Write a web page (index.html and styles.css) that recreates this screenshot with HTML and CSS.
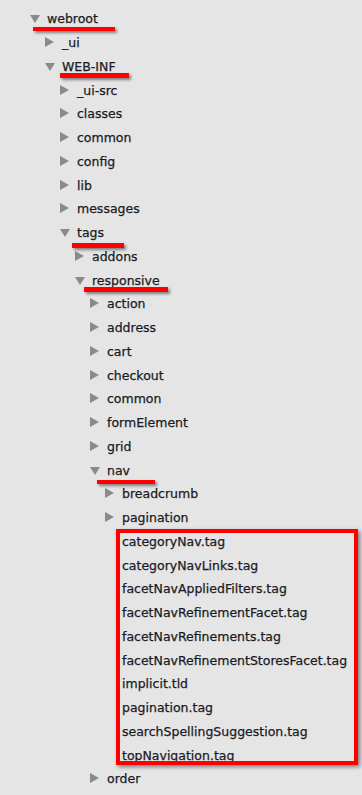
FILE: index.html
```html
<!DOCTYPE html>
<html lang="en">
<head>
    <meta charset="UTF-8">
    <meta name="viewport" content="width=device-width, initial-scale=1.0">
    <title>Project Explorer - webroot</title>
    <link rel="stylesheet" href="styles.css">
</head>
<body>
    <ul class="tree level0">
        <li>
            <div class="row open"><span class="twisty"></span><span class="label">webroot</span><span class="mark mark-webroot"></span></div>
            <ul class="tree">
                <li><div class="row closed"><span class="twisty"></span><span class="label">_ui</span></div></li>
                <li>
                    <div class="row open"><span class="twisty"></span><span class="label">WEB-INF</span><span class="mark mark-webinf"></span></div>
                    <ul class="tree">
                        <li><div class="row closed"><span class="twisty"></span><span class="label">_ui-src</span></div></li>
                        <li><div class="row closed"><span class="twisty"></span><span class="label">classes</span></div></li>
                        <li><div class="row closed"><span class="twisty"></span><span class="label">common</span></div></li>
                        <li><div class="row closed"><span class="twisty"></span><span class="label">config</span></div></li>
                        <li><div class="row closed"><span class="twisty"></span><span class="label">lib</span></div></li>
                        <li><div class="row closed"><span class="twisty"></span><span class="label">messages</span></div></li>
                        <li>
                            <div class="row open"><span class="twisty"></span><span class="label">tags</span><span class="mark mark-tags"></span></div>
                            <ul class="tree">
                                <li><div class="row closed"><span class="twisty"></span><span class="label">addons</span></div></li>
                                <li>
                                    <div class="row open"><span class="twisty"></span><span class="label">responsive</span><span class="mark mark-responsive"></span></div>
                                    <ul class="tree">
                                        <li><div class="row closed"><span class="twisty"></span><span class="label">action</span></div></li>
                                        <li><div class="row closed"><span class="twisty"></span><span class="label">address</span></div></li>
                                        <li><div class="row closed"><span class="twisty"></span><span class="label">cart</span></div></li>
                                        <li><div class="row closed"><span class="twisty"></span><span class="label">checkout</span></div></li>
                                        <li><div class="row closed"><span class="twisty"></span><span class="label">common</span></div></li>
                                        <li><div class="row closed"><span class="twisty"></span><span class="label">formElement</span></div></li>
                                        <li><div class="row closed"><span class="twisty"></span><span class="label">grid</span></div></li>
                                        <li>
                                            <div class="row open"><span class="twisty"></span><span class="label">nav</span><span class="mark mark-nav"></span></div>
                                            <ul class="tree">
                                                <li><div class="row closed"><span class="twisty"></span><span class="label">breadcrumb</span></div></li>
                                                <li><div class="row closed"><span class="twisty"></span><span class="label">pagination</span></div></li>
                                                <li class="files">
                                                    <div class="row file"><span class="twisty"></span><span class="label">categoryNav.tag</span></div>
                                                    <div class="row file"><span class="twisty"></span><span class="label">categoryNavLinks.tag</span></div>
                                                    <div class="row file"><span class="twisty"></span><span class="label">facetNavAppliedFilters.tag</span></div>
                                                    <div class="row file"><span class="twisty"></span><span class="label">facetNavRefinementFacet.tag</span></div>
                                                    <div class="row file"><span class="twisty"></span><span class="label">facetNavRefinements.tag</span></div>
                                                    <div class="row file"><span class="twisty"></span><span class="label">facetNavRefinementStoresFacet.tag</span></div>
                                                    <div class="row file"><span class="twisty"></span><span class="label">implicit.tld</span></div>
                                                    <div class="row file"><span class="twisty"></span><span class="label">pagination.tag</span></div>
                                                    <div class="row file"><span class="twisty"></span><span class="label">searchSpellingSuggestion.tag</span></div>
                                                    <div class="row file"><span class="twisty"></span><span class="label">topNavigation.tag</span></div>
                                                </li>
                                            </ul>
                                        </li>
                                        <li><div class="row closed"><span class="twisty"></span><span class="label">order</span></div></li>
                                    </ul>
                                </li>
                            </ul>
                        </li>
                    </ul>
                </li>
            </ul>
        </li>
    </ul>
</body>
</html>
```

FILE: styles.css
```css
html, body {
    margin: 0;
    background: #e5e5e5;
}
body {
    padding: 7px 0 0 30px;
    font-family: "DejaVu Sans", sans-serif;
    font-size: 12.5px;
    color: #1a1a24;
    -webkit-text-stroke: 0.25px #1a1a24;
    overflow: hidden;
}
.tree {
    list-style: none;
    margin: 0;
    padding: 0 0 0 15px;
}
.tree.level0 {
    padding-left: 0;
}
.row {
    position: relative;
    display: flex;
    align-items: center;
    height: 23.75px;
    white-space: nowrap;
}
.twisty {
    flex: 0 0 17px;
    height: 11px;
    position: relative;
}
.closed .twisty::before,
.open .twisty::before {
    content: '';
    position: absolute;
    width: 0;
    height: 0;
}
.closed .twisty::before {
    left: 0;
    top: 0;
    border-left: 9px solid #8a8a8a;
    border-top: 5.5px solid transparent;
    border-bottom: 5.5px solid transparent;
}
.open .twisty::before {
    left: 0;
    top: 2px;
    border-top: 8px solid #8a8a8a;
    border-left: 5.5px solid transparent;
    border-right: 5.5px solid transparent;
}

/* red annotation marks */
.mark {
    position: absolute;
    height: 4px;
    background: #ff0000;
    box-shadow: 2px 2px 3px rgba(0, 0, 0, 0.45);
}
.mark-webroot { left: 3px; top: 20px; width: 82px; }
.mark-webinf { left: 15px; top: 18px; width: 69px; height: 5px; }
.mark-tags { left: 12px; top: 22px; width: 52px; height: 5px; }
.mark-responsive { left: 9px; top: 19px; width: 84px; height: 5px; }
.mark-nav { left: 7px; top: 22px; width: 58px; }

.files {
    position: relative;
}
.files::after {
    content: '';
    position: absolute;
    left: 11px;
    right: 4px;
    top: -1px;
    bottom: 2px;
    border: 4px solid #ff0000;
    box-shadow: 2px 2px 4px rgba(0, 0, 0, 0.45);
}
```
